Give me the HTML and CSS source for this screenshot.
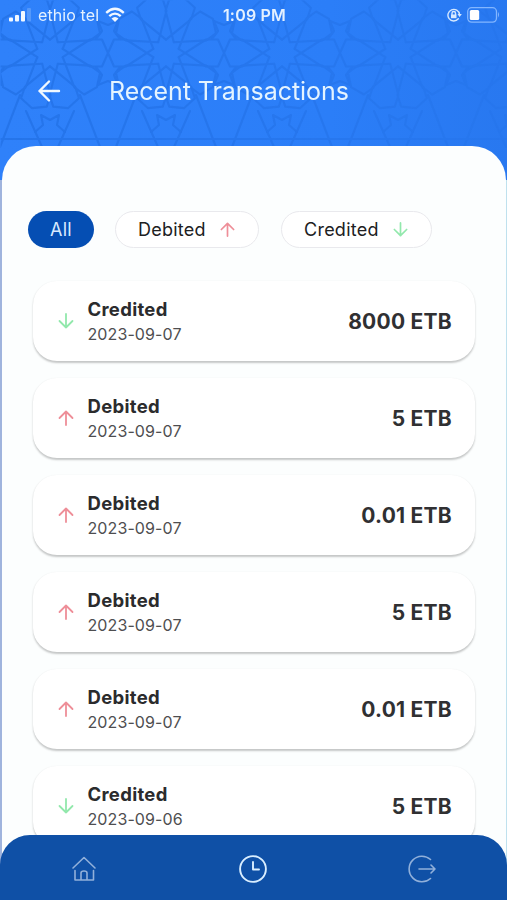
FILE: index.html
```html
<!DOCTYPE html>
<html lang="en">
<head>
    <meta charset="UTF-8">
    <meta name="viewport" content="width=device-width, initial-scale=1.0">
    <title>Recent Transactions</title>

    <link rel="stylesheet" href="styles.css">
</head>
<body>
    <!-- shared icons -->
    <svg class="defs">
        <symbol id="up" viewBox="0 0 18 18"><path d="M9 16V2.5M2.5 9L9 2.5L15.5 9"/></symbol>
        <symbol id="down" viewBox="0 0 18 18"><path d="M9 2V15.5M2.5 9L9 15.5L15.5 9"/></symbol>
    </svg>

    <div class="app">
        <svg class="pattern" viewBox="0 0 507 170">
            <defs>
                <linearGradient id="fade">
                    <stop offset="0" stop-color="#fff"/>
                    <stop offset="0.5" stop-color="#ccc"/>
                    <stop offset="1" stop-color="#777"/>
                </linearGradient>
                <mask id="mask" maskUnits="userSpaceOnUse" x="0" y="0" width="507" height="170"><rect width="507" height="170" fill="url(#fade)"/></mask>
                <path id="petal" d="M12.7 -4.1L40 13.5H52L58 0L52 -13.5H40L12.7 4.1"/>
                <g id="rosette">
                    <use href="#petal"/>
                    <use href="#petal" transform="rotate(36)"/>
                    <use href="#petal" transform="rotate(72)"/>
                    <use href="#petal" transform="rotate(108)"/>
                    <use href="#petal" transform="rotate(144)"/>
                    <use href="#petal" transform="rotate(180)"/>
                    <use href="#petal" transform="rotate(216)"/>
                    <use href="#petal" transform="rotate(252)"/>
                    <use href="#petal" transform="rotate(288)"/>
                    <use href="#petal" transform="rotate(324)"/>
                    <path d="M-58 86H58M30 42L50 94M-30 42L-50 94M24 58L8 94M-24 58L-8 94"/>
                    <path d="M-9 62L0 67L9 62M9 62L7 72L15 79M-9 62L-7 72L-15 79"/>
                    <path d="M46 14L52 22L48 32L58 28L68 32L64 22L70 14M46 -14L52 -22L48 -32L58 -28L68 -32L64 -22L70 -14"/>
                </g>
            </defs>
            <g mask="url(#mask)">
                <use href="#rosette" x="-66" y="53"/>
                <use href="#rosette" x="50" y="53"/>
                <use href="#rosette" x="166" y="53"/>
                <use href="#rosette" x="282" y="53"/>
                <use href="#rosette" x="398" y="53"/>
                <use href="#rosette" x="514" y="53"/>
            </g>
        </svg>

        <div class="status">
            <div class="carrier">
                <svg class="signal" viewBox="0 0 22 14">
                    <rect x="0" y="9.5" width="4" height="4" rx="1"/>
                    <rect x="6" y="7" width="4" height="6.5" rx="1"/>
                    <rect x="12" y="3" width="4" height="10.5" rx="1"/>
                    <rect x="18" y="0" width="4" height="13.5" rx="1" opacity="0.2"/>
                </svg>
                <span>ethio tel</span>
                <svg class="wifi" viewBox="0 0 20 16">
                    <path d="M1.2 5.8Q10 -2.2 18.8 5.8M4.3 9.2Q10 4 15.7 9.2"/>
                    <path class="dot" d="M6.5 11.6Q10 8.6 13.5 11.6L10 15Z"/>
                </svg>
            </div>
            <div class="time">1:09 PM</div>
            <div class="power">
                <svg class="lock" viewBox="0 0 15 14">
                    <path d="M11.3 10.8A5.8 5.8 0 1 1 12.5 6.5"/>
                    <path class="fill" d="M10.5 6H14.8L12.6 8.9Z"/>
                    <path class="fill" d="M4 6.5H9.5V10.2H4Z"/>
                    <path d="M5 6.5V5.2A1.7 1.7 0 0 1 8.5 5.2V6.5"/>
                </svg>
                <svg class="battery" viewBox="0 0 33 16">
                    <rect class="shell" x="0.7" y="0.7" width="28.8" height="14.4" rx="4"/>
                    <rect x="2.8" y="3" width="9.4" height="10" rx="1.5"/>
                    <path class="cap" d="M31 5Q33 7.5 31 10.5Z"/>
                </svg>
            </div>
        </div>

        <div class="header">
            <svg class="back" viewBox="0 0 24 24"><path d="M22 12H2.5M12 2.5L2.5 12L12 21.5"/></svg>
            <h1>Recent Transactions</h1>
        </div>

        <div class="panel">
            <div class="filters">
                <button class="filter active">All</button>
                <button class="filter debit">Debited <svg class="arrow red"><use href="#up"/></svg></button>
                <button class="filter credit">Credited <svg class="arrow green"><use href="#down"/></svg></button>
            </div>

            <div class="list">
                <div class="card">
                    <svg class="arrow green"><use href="#down"/></svg>
                    <div class="info"><h2>Credited</h2><p>2023-09-07</p></div>
                    <div class="amount">8000 ETB</div>
                </div>
                <div class="card">
                    <svg class="arrow red"><use href="#up"/></svg>
                    <div class="info"><h2>Debited</h2><p>2023-09-07</p></div>
                    <div class="amount">5 ETB</div>
                </div>
                <div class="card">
                    <svg class="arrow red"><use href="#up"/></svg>
                    <div class="info"><h2>Debited</h2><p>2023-09-07</p></div>
                    <div class="amount">0.01 ETB</div>
                </div>
                <div class="card">
                    <svg class="arrow red"><use href="#up"/></svg>
                    <div class="info"><h2>Debited</h2><p>2023-09-07</p></div>
                    <div class="amount">5 ETB</div>
                </div>
                <div class="card">
                    <svg class="arrow red"><use href="#up"/></svg>
                    <div class="info"><h2>Debited</h2><p>2023-09-07</p></div>
                    <div class="amount">0.01 ETB</div>
                </div>
                <div class="card">
                    <svg class="arrow green"><use href="#down"/></svg>
                    <div class="info"><h2>Credited</h2><p>2023-09-06</p></div>
                    <div class="amount">5 ETB</div>
                </div>
            </div>
        </div>

        <div class="nav">
            <svg viewBox="0 0 28 28"><path d="M3 13L14 2.5L25 13M5 15.5V25H23.5V15.5M11 25V18Q11 16 14 16Q17 16 17 18V25"/></svg>
            <svg class="current" viewBox="0 0 28 28"><circle cx="14" cy="14" r="12.9"/><path d="M14 7V14.5H20"/></svg>
            <svg viewBox="0 0 28 28"><path d="M22.5 4.5A12.8 12.8 0 1 0 22.5 23.5M11 14H27M23 10L27 14L23 18"/></svg>
        </div>
    </div>
</body>
</html>
```
FILE: styles.css
```css
*{
    box-sizing: border-box;
}
body{
    margin: 0;
    font-family: Inter, "Liberation Sans", sans-serif;
}
h1, h2, p{
    margin: 0;
}
svg{
    fill: none;
    stroke-linecap: round;
    stroke-linejoin: round;
    flex-shrink: 0;
}
.defs{
    display: none;
}
.app{
    position: relative;
    width: 507px;
    height: 900px;
    overflow: hidden;
    display: flex;
    flex-direction: column;
    /* blue header on top, pale edges beside the panel */
    background:
        linear-gradient(90deg, #2f81fa, #2b7ef8 65%, #2878f0) 0 0 / 100% 180px no-repeat,
        linear-gradient(90deg, #a0b4dd 50%, #bfe1ee 50%);
}
/* star pattern behind the header */
.pattern{
    position: absolute;
    top: 0;
    left: 0;
    width: 507px;
    height: 170px;
    stroke: #2574ea;
    stroke-width: 2.1;
}
.status{
    position: relative;
    display: flex;
    align-items: center;
    justify-content: space-between;
    height: 29px;
    padding: 0 7px 0 9px;
    color: #e4f1ff;
    font-size: 16px;
}
.carrier, .power{
    display: flex;
    align-items: center;
    width: 130px;
}
.carrier span{
    margin: 0 6px 0 7px;
    letter-spacing: 0.1px;
}
.signal{
    width: 22px;
    height: 14px;
    fill: #f2f8ff;
}
.wifi{
    width: 20px;
    height: 16px;
    stroke: #f2f8ff;
    stroke-width: 2.3;
    stroke-linecap: butt;
}
.wifi .dot{
    fill: #f2f8ff;
    stroke: none;
}
.time{
    font-weight: 600;
    letter-spacing: 0.2px;
}
.power{
    justify-content: flex-end;
    gap: 5px;
}
.lock{
    width: 15px;
    height: 14px;
    stroke: #d5e8ff;
    stroke-width: 1.4;
}
.lock .fill{
    fill: #d5e8ff;
    stroke: none;
}
.battery{
    width: 33px;
    height: 16px;
    fill: #fff;
}
.battery .shell{
    fill: none;
    stroke: #83b6ff;
    stroke-width: 1.3;
}
.battery .cap{
    fill: #83b6ff;
}
.header{
    position: relative;
    display: flex;
    align-items: center;
    height: 117px;
    padding: 7px 0 0 37px;
}
.back{
    width: 24px;
    height: 24px;
    stroke: #f0f8ff;
    stroke-width: 2.4;
}
.header h1{
    margin-left: 48px;
    color: #e4f4ff;
    font-size: 25px;
    font-weight: 400;
    letter-spacing: -0.05px;
}
.panel{
    position: relative;
    flex: 1;
    min-height: 0;
    margin: 0 1px 0 2px;
    padding: 65px 31px 0;
    background-color: #fcfefe;
    border-radius: 34px 34px 0 0;
}
.filters{
    display: flex;
    margin-left: -5px;
    height: 37px;
}
.filter{
    display: flex;
    align-items: center;
    justify-content: space-between;
    border: 1.5px solid #e9e9ed;
    border-radius: 19px;
    background-color: #fff;
    padding: 0 22px;
    font-family: inherit;
    font-size: 18px;
    letter-spacing: 0.25px;
    color: #202022;
}
.filter.active{
    width: 66px;
    justify-content: center;
    border: none;
    padding: 0;
    background-color: #054eb3;
    color: #d9eaff;
}
.debit{
    width: 144px;
    margin-left: 21px;
}
.credit{
    width: 151px;
    margin-left: 22px;
}
.arrow{
    width: 18px;
    height: 18px;
    stroke-width: 1.8;
}
.filter .arrow{
    width: 17px;
    height: 17px;
}
.red{
    stroke: #ee8e98;
}
.green{
    stroke: #92e8ac;
}
.list{
    display: flex;
    flex-direction: column;
    gap: 17px;
    margin-top: 33px;
}
.card{
    display: flex;
    align-items: center;
    width: 442px;
    height: 80px;
    padding: 0 23px 0 24px;
    background-color: #fff;
    border-radius: 24px;
    box-shadow: 0 1.5px 2px rgba(0, 0, 0, 0.22);
}
.info{
    flex: 1;
    margin-left: 12.5px;
}
.info h2{
    font-size: 18.5px;
    line-height: 26px;
    font-weight: 650;
    letter-spacing: 0.3px;
    color: #2b2b2d;
}
.info p{
    font-size: 16px;
    line-height: 24px;
    letter-spacing: 0.1px;
    color: #4e4e50;
}
.amount{
    font-size: 21px;
    font-weight: 700;
    letter-spacing: 0.25px;
    color: #303032;
}
.nav{
    position: absolute;
    left: 0;
    bottom: 0;
    width: 507px;
    height: 65px;
    display: flex;
    align-items: center;
    justify-content: space-between;
    padding: 3px 71px 0 70px;
    background-color: #0f50a6;
    border-radius: 30px 30px 0 0;
}
.nav svg{
    width: 28px;
    height: 28px;
    stroke: #91b0da;
    stroke-width: 1.6;
}
.nav .current{
    stroke: #d9eeff;
    stroke-width: 1.9;
}
```
